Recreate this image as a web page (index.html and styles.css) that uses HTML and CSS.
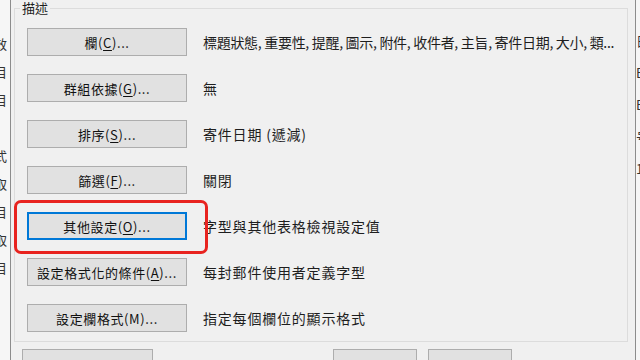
FILE: index.html
```html
<!DOCTYPE html>
<html lang="zh-Hant">
<head>
    <meta charset="UTF-8">
    <meta name="viewport" content="width=device-width, initial-scale=1.0">
    <title>進階檢視設定</title>
    <link rel="stylesheet" href="styles.css">
</head>
<body>
    <div class="behind behind-left">
        <span>效</span><span>目</span><span>目</span><span>(</span><span>式</span>
        <span>取</span><span>目</span><span>取</span><span>目</span>
    </div>

    <div class="dialog">
        <fieldset class="group">
            <legend>描述</legend>
            <div class="rows">
                <div class="row">
                    <button type="button" class="btn">欄(<u>C</u>)...</button>
                    <span class="desc desc-tight">標題狀態, 重要性, 提醒, 圖示, 附件, 收件者, 主旨, 寄件日期, 大小, 類...</span>
                </div>
                <div class="row">
                    <button type="button" class="btn">群組依據(<u>G</u>)...</button>
                    <span class="desc">無</span>
                </div>
                <div class="row">
                    <button type="button" class="btn">排序(<u>S</u>)...</button>
                    <span class="desc">寄件日期 (遞減)</span>
                </div>
                <div class="row">
                    <button type="button" class="btn">篩選(<u>F</u>)...</button>
                    <span class="desc">關閉</span>
                </div>
                <div class="row">
                    <button type="button" class="btn btn-focus">其他設定(<u>O</u>)...</button>
                    <span class="desc">字型與其他表格檢視設定值</span>
                </div>
                <div class="row">
                    <button type="button" class="btn">設定格式化的條件(<u>A</u>)...</button>
                    <span class="desc">每封郵件使用者定義字型</span>
                </div>
                <div class="row">
                    <button type="button" class="btn">設定欄格式(M)...</button>
                    <span class="desc">指定每個欄位的顯示格式</span>
                </div>
            </div>
        </fieldset>

        <div class="footer">
            <button type="button" class="btn btn-wide">重設目前檢視</button>
            <div class="spacer"></div>
            <button type="button" class="btn btn-small">確定</button>
            <button type="button" class="btn btn-small">取消</button>
        </div>
    </div>

    <div class="behind behind-right">
        <span>日</span><span>E</span><span>E</span><span>号</span><span>1</span>
    </div>

    <!-- 標示框 -->
    <div class="highlight"></div>
</body>
</html>
```

FILE: styles.css
```css
* {
    box-sizing: border-box;
}

body {
    margin: 0;
    width: 640px;
    height: 360px;
    overflow: hidden;
    position: relative;
    display: flex;
    background-color: #f0f0f0;
    font-family: "Noto Sans CJK TC", "Noto Sans", sans-serif;
    color: #1e1e1e;
}

.behind {
    display: flex;
    flex-direction: column;
    background-color: #f6f6f6;
    overflow: hidden;
    font-size: 13px;
    color: #333;
}

.behind-left {
    width: 11px;
    border-right: 1px solid #8c8c8c;
    padding-top: 36px;
    gap: 12px;
}

.behind-left span {
    margin-left: -6px;
    line-height: 16px;
}

.behind-right {
    width: 5px;
    border-left: 1px solid #8c8c8c;
    padding-top: 34px;
    gap: 18px;
}

.behind-right span {
    line-height: 14px;
}

.dialog {
    flex: 1;
    padding: 0 7px 0 3px;
}

.group {
    margin: 0;
    padding: 0;
    border: 1px solid #dcdcdc;
}

.group legend {
    margin-left: 5px;
    padding: 0 2px;
    font-size: 13px;
    line-height: 16px;
}

.rows {
    display: flex;
    flex-direction: column;
    gap: 18px;
    padding: 12px 12px 9px;
}

.row {
    display: flex;
    align-items: center;
    gap: 16px;
    height: 28px;
}

.btn {
    height: 28px;
    padding: 0;
    background-color: #e1e1e1;
    border: 1px solid #adadad;
    border-radius: 0;
    font-family: inherit;
    font-size: 13px;
    letter-spacing: 0.6px;
    color: #111;
}

.row .btn {
    width: 160px;
    flex: none;
}

.btn u {
    text-underline-offset: 2px;
}

.btn-focus {
    border: 2px solid #0078d7;
}

.desc {
    font-size: 14px;
    letter-spacing: 0.8px;
    white-space: nowrap;
}

.desc-tight {
    letter-spacing: -0.3px;
}

.footer {
    display: flex;
    align-items: flex-start;
    margin-top: 7px;
    padding-left: 8px;
}

.footer .btn {
    height: 40px;
    padding-top: 14px;
}

.spacer {
    width: 180px;
}

.btn-wide {
    width: 131px;
}

.btn-small {
    width: 84px;
    margin-right: 11px;
}

.highlight {
    position: absolute;
    left: 14px;
    top: 200px;
    width: 194px;
    height: 54px;
    border: 3px solid #e8231f;
    border-radius: 7px;
}
```
